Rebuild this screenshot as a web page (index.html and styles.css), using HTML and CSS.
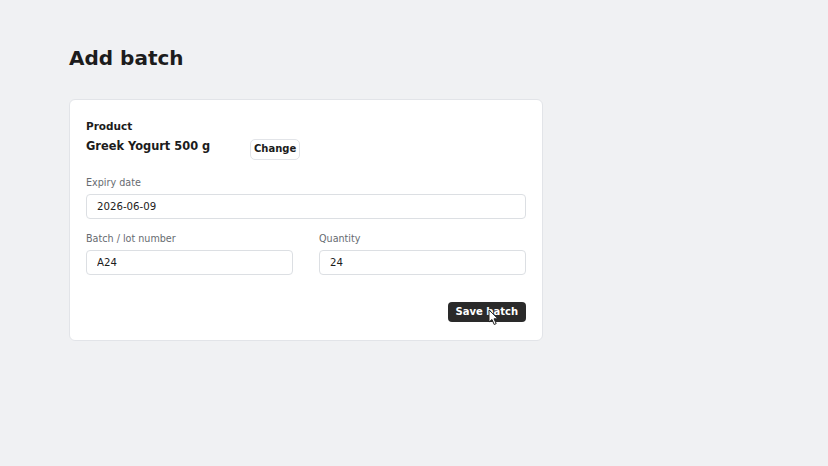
FILE: index.html
```html
<!DOCTYPE html>
<html lang="en">
<head>
  <meta charset="UTF-8">
  <meta name="viewport" content="width=device-width, initial-scale=1.0">
  <title>Add batch</title>
  <link rel="stylesheet" href="styles.css">
</head>
<body>
  <main class="page">
    <h1>Add batch</h1>

    <form class="card">
      <div class="product">
        <div class="label-strong">Product</div>
        <div class="product-row">
          <span class="product-name">Greek Yogurt 500 g</span>
          <button type="button" class="btn-light">Change</button>
        </div>
      </div>

      <div class="field">
        <label>Expiry date</label>
        <input type="text" value="2026-06-09">
      </div>

      <div class="grid">
        <div class="field">
          <label>Batch / lot number</label>
          <input type="text" value="A24">
        </div>
        <div class="field">
          <label>Quantity</label>
          <input type="text" value="24">
        </div>
      </div>

      <div class="actions">
        <button type="submit" class="btn-dark">Save batch
          <svg class="cursor" width="12" height="17" viewBox="0 0 12 17">
            <path d="M1 1 L1 13 L4 10.5 L6.2 15.5 L8.2 14.6 L6 9.8 L10 9.8 Z" fill="#fff" stroke="#222" stroke-width="1"/>
          </svg>
        </button>
      </div>
    </form>
  </main>
</body>
</html>
```
FILE: styles.css
```css
body {
  margin: 0;
  background-color: #f0f1f3;
  font-family: "DejaVu Sans", sans-serif;
  color: #1c1c1c;
}

.page {
  padding: 44px 69px;
  width: 474px;
}

h1 {
  font-size: 20px;
  margin: 0 0 27px 0;
  line-height: 28px;
}

.card {
  background: white;
  border: 1px solid #e2e4e8;
  border-radius: 6px;
  padding: 19px 16px 18px 16px;
}

.label-strong {
  font-size: 10.5px;
  font-weight: bold;
  line-height: 14px;
}

.product-row {
  display: flex;
  align-items: flex-start;
  margin-top: 6px;
}

.product-name {
  width: 164px;
  font-size: 11.4px;
  font-weight: bold;
  line-height: 14px;
}

.btn-light {
  font-family: inherit;
  font-size: 10px;
  font-weight: bold;
  color: #1c1c1c;
  background: white;
  border: 1px solid #e2e4e8;
  border-radius: 5px;
  padding: 3px 3px 5px 3px;
  line-height: 11px;
  height: 21px;
}

.field {
  display: flex;
  flex-direction: column;
  margin-top: 17px;
}

.field label {
  font-size: 9.6px;
  color: #676b71;
  line-height: 12px;
  margin-bottom: 5px;
}

.field input {
  font-family: inherit;
  font-size: 10.2px;
  color: #1c1c1c;
  border: 1px solid #dcdfe3;
  border-radius: 4px;
  padding: 4px 10px;
  box-sizing: border-box;
  height: 25px;
}

.grid {
  display: grid;
  grid-template-columns: 1fr 1fr;
  gap: 26px;
}

.grid .field {
  margin-top: 14px;
}

.actions {
  display: flex;
  justify-content: flex-end;
  margin-top: 27px;
}

.btn-dark {
  position: relative;
  font-family: inherit;
  font-size: 10px;
  font-weight: bold;
  color: white;
  background: #2a2a2a;
  border: none;
  border-radius: 4px;
  padding: 0 8px;
  height: 20px;
  line-height: 20px;
}

.cursor {
  position: absolute;
  left: 40px;
  top: 7px;
}
```
